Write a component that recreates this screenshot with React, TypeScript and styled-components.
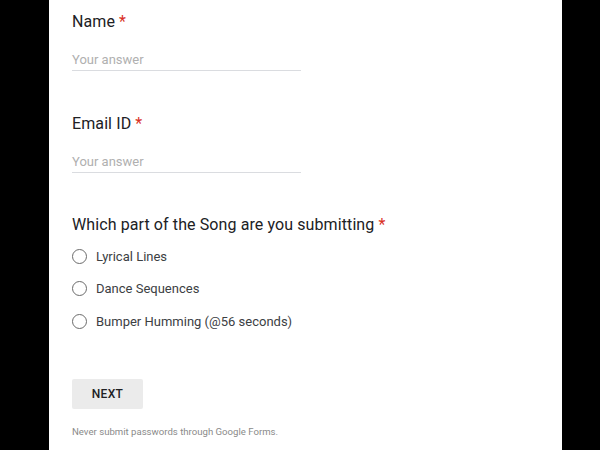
import React from "react";
import styled, { createGlobalStyle } from "styled-components";

const Global = createGlobalStyle`
  html, body { margin: 0; padding: 0; background: #000; }
  body { font-family: Roboto, "Liberation Sans", Arial, sans-serif; }
`;

const Page = styled.div`
  width: 600px;
  height: 450px;
  background: #000;
  display: flex;
  overflow: hidden;
`;

const Panel = styled.div`
  margin-left: 49px;
  width: 513px;
  height: 450px;
  background: #fff;
  padding: 10px 0 0 23px;
  box-sizing: border-box;
  display: flex;
  flex-direction: column;
`;

const Question = styled.div<{ $gap?: number }>`
  display: flex;
  flex-direction: column;
  margin-top: ${(p) => p.$gap ?? 0}px;
`;

const Title = styled.div`
  font-size: 16px;
  line-height: 24px;
  color: #202124;
  letter-spacing: 0.1px;
`;

const Required = styled.span`
  color: #d93025;
  margin-left: 4px;
`;

const AnswerField = styled.div`
  margin-top: 16px;
  width: 229px;
  font-size: 13px;
  line-height: 20px;
  color: #b0b0b0;
  border-bottom: 1px solid #dadce0;
`;

const Options = styled.div`
  margin-top: 3px;
  display: flex;
  flex-direction: column;
`;

const Option = styled.label`
  height: 32.5px;
  display: flex;
  align-items: center;
  gap: 9px;
  font-size: 13px;
  color: #3c4043;
`;

const Radio = styled.span`
  width: 13px;
  height: 13px;
  border: 1.5px solid #6b6b6b;
  border-radius: 50%;
  flex: none;
`;

const NextButton = styled.button`
  margin-top: 41px;
  width: 71px;
  height: 30px;
  border: none;
  border-radius: 2px;
  background: #ebebeb;
  color: #202124;
  font-family: Roboto, "Liberation Sans", Arial, sans-serif;
  font-size: 12px;
  font-weight: 500;
  letter-spacing: 0.3px;
  padding: 0;
  cursor: pointer;
`;

const Footer = styled.div`
  margin-top: 16px;
  font-size: 9.6px;
  line-height: 14px;
  color: #8a8a8a;
`;

const options = ["Lyrical Lines", "Dance Sequences", "Bumper Humming (@56 seconds)"];

export default function App() {
  return (
    <>
      <Global />
      <Page>
        <Panel>
          <Question>
            <Title>
              Name<Required>*</Required>
            </Title>
            <AnswerField>Your answer</AnswerField>
          </Question>
          <Question $gap={41}>
            <Title>
              Email ID<Required>*</Required>
            </Title>
            <AnswerField>Your answer</AnswerField>
          </Question>
          <Question $gap={40}>
            <Title>
              Which part of the Song are you submitting<Required>*</Required>
            </Title>
            <Options>
              {options.map((o) => (
                <Option key={o}>
                  <Radio />
                  {o}
                </Option>
              ))}
            </Options>
          </Question>
          <div>
            <NextButton>NEXT</NextButton>
          </div>
          <Footer>Never submit passwords through Google Forms.</Footer>
        </Panel>
      </Page>
    </>
  );
}
